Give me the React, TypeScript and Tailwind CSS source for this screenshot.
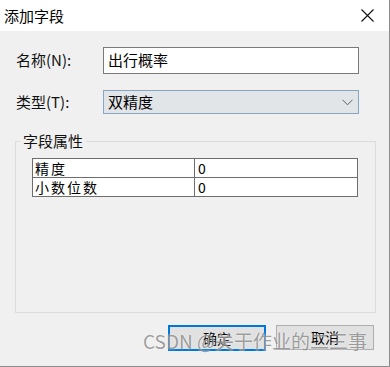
import React from "react";

const font = { fontFamily: "'Noto Sans CJK SC', 'Liberation Sans', sans-serif" };

function Chevron() {
  return (
    <svg width="11" height="7" viewBox="0 0 11 7" fill="none" stroke="#606060" strokeWidth={1}>
      <path d="M0.5 0.8 L5.5 5.8 L10.5 0.8" />
    </svg>
  );
}

function CloseIcon() {
  return (
    <svg width="13" height="13" viewBox="0 0 13 13" fill="none" stroke="#111" strokeWidth={1.1}>
      <path d="M0.5 0.5 L12.5 12.5 M12.5 0.5 L0.5 12.5" />
    </svg>
  );
}

export default function App() {
  return (
    <div
      className="relative flex h-[367px] w-[390px] flex-col overflow-hidden border-r border-b border-[#8c8c8c] bg-[#f0f0f0] text-black"
      style={font}
    >
      {/* title bar */}
      <div className="flex h-[31px] shrink-0 items-center justify-between bg-white pl-[4px] pr-[15px]">
        <span className="text-[15px] leading-none">添加字段</span>
        <CloseIcon />
      </div>

      <div className="flex flex-1 flex-col">
        {/* name row */}
        <div className="mt-[16px] flex items-center">
          <span className="w-[103px] pl-[16px] text-[15px] text-[#111]">名称(N):</span>
          <div className="flex h-[27px] w-[256px] items-center border border-[#7a7a7a] bg-white pl-[4px] text-[15px]">
            出行概率
          </div>
        </div>

        {/* type row */}
        <div className="mt-[16px] flex items-center">
          <span className="w-[103px] pl-[16px] text-[15px] text-[#111]">类型(T):</span>
          <div className="flex h-[24px] w-[256px] items-center justify-between border border-[#86a6c4] bg-[#e2e5e8] pl-[4px] pr-[5px] text-[15px]">
            <span>双精度</span>
            <Chevron />
          </div>
        </div>

        {/* group box */}
        <fieldset className="ml-[15px] mt-[17px] h-[182px] w-[361px] border border-[#dcdcdc]">
          <legend className="ml-[4px] px-[3px] text-[15px] leading-[20px] text-[#111]">字段属性</legend>
          <div className="ml-[16px] mt-[7px] w-[326px] border border-[#6d6d6d] bg-white text-[14px] leading-none">
            <div className="flex h-[18px]">
              <div className="flex w-[162px] items-center border-r border-[#6d6d6d] pl-[2px] tracking-[2px]">精度</div>
              <div className="flex flex-1 items-center pl-[3px]">0</div>
            </div>
            <div className="flex h-[19px] border-t border-[#6d6d6d]">
              <div className="flex w-[162px] items-center border-r border-[#6d6d6d] pl-[2px] tracking-[2px]">小数位数</div>
              <div className="flex flex-1 items-center pl-[3px]">0</div>
            </div>
          </div>
        </fieldset>

        {/* buttons */}
        <div className="mt-[12px] flex items-start justify-end gap-[10px] pr-[15px]">
          <button className="h-[26px] w-[98px] border-2 border-[#0078d7] bg-[#e1e1e1] text-[14px]">确定</button>
          <button className="h-[25px] w-[98px] border border-[#adadad] bg-[#e1e1e1] text-[14px]">取消</button>
        </div>
      </div>

      {/* watermark */}
      <div
        className="pointer-events-none absolute left-[143px] top-[331px] text-[19px] leading-none text-[#808080]/75"
        style={{ textShadow: "0 0 2px rgba(255,255,255,0.8)" }}
      >
        CSDN @关于作业的二三事
      </div>
    </div>
  );
}
